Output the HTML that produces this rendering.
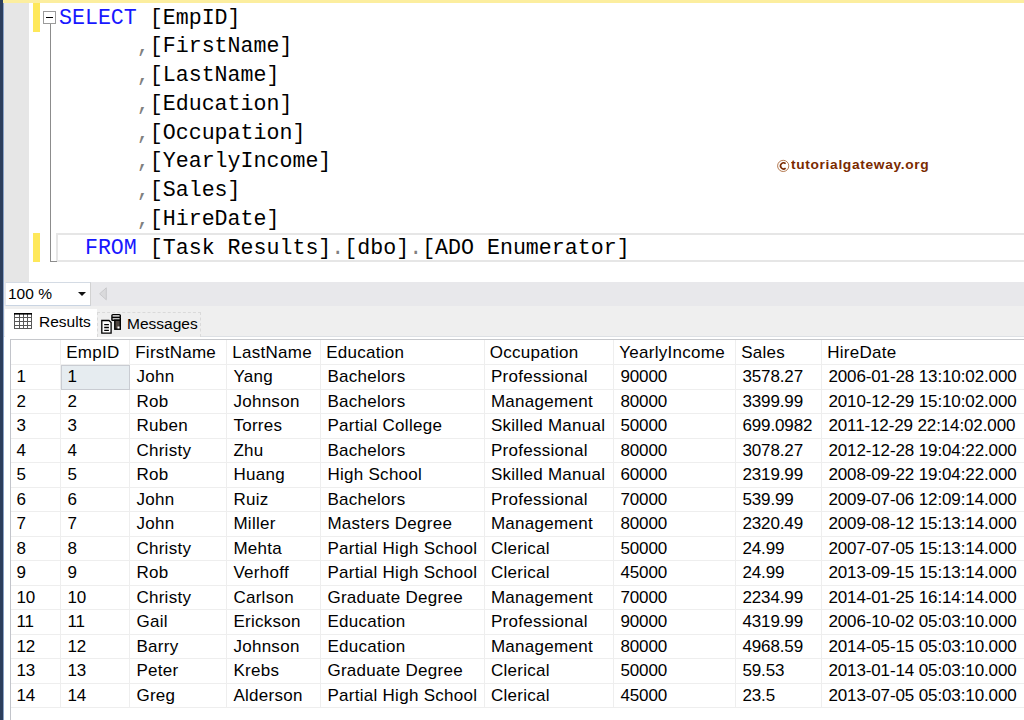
<!DOCTYPE html>
<html><head><meta charset="utf-8">
<style>
*{margin:0;padding:0;box-sizing:border-box}
html,body{width:1024px;height:720px;overflow:hidden;background:#fff}
body{position:relative;font-family:"Liberation Sans",sans-serif}
.abs{position:absolute}
#navy{left:0;top:0;width:2.5px;height:720px;background:#2c3e5c}
#navy2{left:2.5px;top:0;width:1.5px;height:720px;background:#8aa2c6}
#topband{left:3px;top:0;width:1021px;height:3px;background:#fcee9f}
#gutter{left:4px;top:3px;width:25px;height:279px;background:#e6e6e6}
.mark{left:32.5px;width:7.2px;background:#fee85a}
#box{left:43px;top:11px;width:13px;height:13px;border:1.5px solid #9b9b9b;background:#fff}
#minus{left:46px;top:16.5px;width:7px;height:1.5px;background:#000}
#vline{left:50px;top:24px;width:1px;height:237.5px;background:#8c8c8c}
#hline{left:50px;top:260.5px;width:7px;height:1px;background:#8c8c8c}
#curline{left:56px;top:233px;width:970px;height:29px;border:2px solid #e6e6e6;border-right:none}
.code{position:absolute;left:59px;font-family:"Liberation Mono",monospace;font-size:21.6px;letter-spacing:0.01px;line-height:28.75px;white-space:pre;color:#000}
.k{color:#1818ff}
.g{color:#808080}
#wm{left:790.5px;top:157.5px;font-family:"Liberation Sans",sans-serif;font-weight:bold;font-size:12.5px;color:#7a2a00;letter-spacing:0.6px;white-space:pre;transform:scaleX(1.1);transform-origin:0 0}
#zoombar{left:4px;top:281.5px;width:1020px;height:24.5px;background:#e8e8eb}
#tabbar{left:4px;top:306px;width:1020px;height:31px;background:#efefef}
#tabline{left:4px;top:336px;width:1020px;height:1px;background:#dde0e4}
#tabwhite{left:4px;top:337px;width:1020px;height:383px;background:#fff}
#combo{left:5px;top:282px;width:85.5px;height:23.5px;background:#fff;border:1px solid #e4e8ee;border-right-color:#d2d2d2;border-bottom-color:#c9d4e2;border-top-color:#d4dbe4}
#combotxt{left:8px;top:285px;font-size:15.5px;color:#000;white-space:pre}
#tri{left:78px;top:292px;width:0;height:0;border-left:4px solid transparent;border-right:4px solid transparent;border-top:4.2px solid #111}
#sarrow{display:none}
#tabres{left:5px;top:309px;width:92px;height:31px;background:#fff}
#tabmsg{left:97px;top:311.5px;width:104px;height:25px;background:#efefef;border:1px dashed #dadada;border-bottom:none}
.tabtxt{position:absolute;font-size:15.5px;color:#000;white-space:pre}
#grid{left:10px;top:339px;width:1014px;height:381px;background:#fff;border-left:1px solid #c2c4ca;border-top:1px solid #c6c8cc}
.cell{position:absolute;font-size:17px;color:#000;white-space:pre}
.vl{position:absolute;width:1px;background:#eeeeee}
.hl{position:absolute;height:1px;background:#eeeeee}
#sel{left:61px;top:364.5px;width:69px;height:25px;background:#e6ecf0;border:1px solid #c9ccd2}
</style></head><body>
<div id="navy" class="abs"></div>
<div id="navy2" class="abs"></div>
<div id="topband" class="abs"></div>
<div id="gutter" class="abs"></div>
<div class="abs mark" style="top:3px;height:28.5px"></div>
<div class="abs mark" style="top:233px;height:29px"></div>
<div id="curline" class="abs"></div>
<div id="box" class="abs"></div>
<div id="minus" class="abs"></div>
<div id="vline" class="abs"></div>
<div id="hline" class="abs"></div>
<div class="code" style="top:3.6px"><span class="k">SELECT</span> [EmpID]
      <span class="g">,</span>[FirstName]
      <span class="g">,</span>[LastName]
      <span class="g">,</span>[Education]
      <span class="g">,</span>[Occupation]
      <span class="g">,</span>[YearlyIncome]
      <span class="g">,</span>[Sales]
      <span class="g">,</span>[HireDate]
  <span class="k">FROM</span> [Task Results]<span class="g">.</span>[dbo]<span class="g">.</span>[ADO Enumerator]</div>
<div id="wm" class="abs">tutorialgateway.org</div>
<svg class="abs" style="left:770px;top:150px" width="30" height="30"><circle cx="13.2" cy="15.9" r="5.6" fill="none" stroke="#b57a50" stroke-width="1"/><path d="M15.6 13.7A3 3 0 1 0 15.6 18.1" fill="none" stroke="#7a2a00" stroke-width="1.6"/></svg>
<div id="zoombar" class="abs"></div>
<div id="tabbar" class="abs"></div>
<div id="tabline" class="abs"></div>
<div id="tabwhite" class="abs"></div>
<div id="combo" class="abs"></div>
<div id="combotxt" class="abs">100 %</div>
<div id="tri" class="abs"></div>
<svg class="abs" style="left:96px;top:285px" width="14" height="18"><path d="M10.3 2.8L3.6 8.8L10.3 14.8Z" fill="#dadadc" stroke="#c6c6c8" stroke-width="0.9"/></svg>
<div id="tabres" class="abs"></div>
<div id="tabmsg" class="abs"></div>
<div class="tabtxt" style="left:39px;top:313px">Results</div>
<div class="tabtxt" style="left:127px;top:315px">Messages</div>
<div id="grid" class="abs"></div>
<svg class="abs" style="left:0;top:0" width="1024" height="720" viewBox="0 0 1024 720">
<g fill="none" stroke="#585858" stroke-width="1">
<rect x="14.5" y="313.5" width="17" height="15" fill="#fff"/>
<path d="M19.5 314V329M23.5 314V329M27.5 314V329M14.5 317.5H31.5M14.5 321.5H31.5M14.5 325.5H31.5"/>
</g>
<rect x="14" y="313" width="18" height="1.6" fill="#000"/>
<g stroke="#000" stroke-width="1.3" fill="#fff">
<path d="M101.8 320.5H109L111.1 322.6V333.1H101.8Z"/>
<path d="M104.2 324.6H108.9M104.2 327.5H108.9M104.2 330.4H108.9" fill="none"/>
</g>
<g stroke="#000" stroke-width="1.4">
<rect x="111.9" y="314.6" width="8.4" height="2.9" rx="1" fill="#fff"/>
<rect x="111.9" y="317.5" width="8.4" height="2.7" rx="0.5" fill="#fff"/>
<rect x="114.8" y="320.2" width="5.5" height="9" fill="#4e4540"/>
</g>
<rect x="117.5" y="326.5" width="2" height="2" fill="#fff"/>
</svg>
<!--ROWS-->
<div class="vl" style="left:60.0px;top:340px;height:367.5px"></div>
<div class="vl" style="left:129.1px;top:340px;height:367.5px"></div>
<div class="vl" style="left:226.3px;top:340px;height:367.5px"></div>
<div class="vl" style="left:320.0px;top:340px;height:367.5px"></div>
<div class="vl" style="left:483.9px;top:340px;height:367.5px"></div>
<div class="vl" style="left:612.8px;top:340px;height:367.5px"></div>
<div class="vl" style="left:735.2px;top:340px;height:367.5px"></div>
<div class="vl" style="left:821.0px;top:340px;height:367.5px"></div>
<div class="hl" style="left:11px;top:364.2px;width:1013px"></div>
<div class="hl" style="left:11px;top:388.7px;width:1013px"></div>
<div class="hl" style="left:11px;top:413.2px;width:1013px"></div>
<div class="hl" style="left:11px;top:437.7px;width:1013px"></div>
<div class="hl" style="left:11px;top:462.2px;width:1013px"></div>
<div class="hl" style="left:11px;top:486.7px;width:1013px"></div>
<div class="hl" style="left:11px;top:511.2px;width:1013px"></div>
<div class="hl" style="left:11px;top:535.7px;width:1013px"></div>
<div class="hl" style="left:11px;top:560.2px;width:1013px"></div>
<div class="hl" style="left:11px;top:584.7px;width:1013px"></div>
<div class="hl" style="left:11px;top:609.2px;width:1013px"></div>
<div class="hl" style="left:11px;top:633.7px;width:1013px"></div>
<div class="hl" style="left:11px;top:658.2px;width:1013px"></div>
<div class="hl" style="left:11px;top:682.7px;width:1013px"></div>
<div class="hl" style="left:11px;top:707.2px;width:1013px"></div>
<div id="sel" class="abs"></div>
<div class="cell" style="left:66.2px;top:343.3px;letter-spacing:0.28px">EmpID</div>
<div class="cell" style="left:135.2px;top:343.3px;letter-spacing:0.28px">FirstName</div>
<div class="cell" style="left:232.2px;top:343.3px;letter-spacing:0.28px">LastName</div>
<div class="cell" style="left:326.2px;top:343.3px;letter-spacing:0.28px">Education</div>
<div class="cell" style="left:489.7px;top:343.3px;letter-spacing:0.28px">Occupation</div>
<div class="cell" style="left:619.2px;top:343.3px;letter-spacing:0.28px">YearlyIncome</div>
<div class="cell" style="left:741.2px;top:343.3px;letter-spacing:0.28px">Sales</div>
<div class="cell" style="left:827.2px;top:343.3px;letter-spacing:0.28px">HireDate</div>
<div class="cell" style="left:16.4px;top:367.3px;letter-spacing:-0.12px">1</div>
<div class="cell" style="left:67.4px;top:367.3px;letter-spacing:-0.12px">1</div>
<div class="cell" style="left:136.4px;top:367.3px;letter-spacing:0.28px">John</div>
<div class="cell" style="left:233.4px;top:367.3px;letter-spacing:0.28px">Yang</div>
<div class="cell" style="left:327.4px;top:367.3px;letter-spacing:0.28px">Bachelors</div>
<div class="cell" style="left:490.9px;top:367.3px;letter-spacing:0.28px">Professional</div>
<div class="cell" style="left:620.4px;top:367.3px;letter-spacing:-0.12px">90000</div>
<div class="cell" style="left:742.4px;top:367.3px;letter-spacing:-0.12px">3578.27</div>
<div class="cell" style="left:828.4px;top:367.3px;letter-spacing:-0.12px">2006-01-28 13:10:02.000</div>
<div class="cell" style="left:16.4px;top:391.8px;letter-spacing:-0.12px">2</div>
<div class="cell" style="left:67.4px;top:391.8px;letter-spacing:-0.12px">2</div>
<div class="cell" style="left:136.4px;top:391.8px;letter-spacing:0.28px">Rob</div>
<div class="cell" style="left:233.4px;top:391.8px;letter-spacing:0.28px">Johnson</div>
<div class="cell" style="left:327.4px;top:391.8px;letter-spacing:0.28px">Bachelors</div>
<div class="cell" style="left:490.9px;top:391.8px;letter-spacing:0.28px">Management</div>
<div class="cell" style="left:620.4px;top:391.8px;letter-spacing:-0.12px">80000</div>
<div class="cell" style="left:742.4px;top:391.8px;letter-spacing:-0.12px">3399.99</div>
<div class="cell" style="left:828.4px;top:391.8px;letter-spacing:-0.12px">2010-12-29 15:10:02.000</div>
<div class="cell" style="left:16.4px;top:416.3px;letter-spacing:-0.12px">3</div>
<div class="cell" style="left:67.4px;top:416.3px;letter-spacing:-0.12px">3</div>
<div class="cell" style="left:136.4px;top:416.3px;letter-spacing:0.28px">Ruben</div>
<div class="cell" style="left:233.4px;top:416.3px;letter-spacing:0.28px">Torres</div>
<div class="cell" style="left:327.4px;top:416.3px;letter-spacing:0.28px">Partial College</div>
<div class="cell" style="left:490.9px;top:416.3px;letter-spacing:0.28px">Skilled Manual</div>
<div class="cell" style="left:620.4px;top:416.3px;letter-spacing:-0.12px">50000</div>
<div class="cell" style="left:742.4px;top:416.3px;letter-spacing:-0.12px">699.0982</div>
<div class="cell" style="left:828.4px;top:416.3px;letter-spacing:-0.12px">2011-12-29 22:14:02.000</div>
<div class="cell" style="left:16.4px;top:440.8px;letter-spacing:-0.12px">4</div>
<div class="cell" style="left:67.4px;top:440.8px;letter-spacing:-0.12px">4</div>
<div class="cell" style="left:136.4px;top:440.8px;letter-spacing:0.28px">Christy</div>
<div class="cell" style="left:233.4px;top:440.8px;letter-spacing:0.28px">Zhu</div>
<div class="cell" style="left:327.4px;top:440.8px;letter-spacing:0.28px">Bachelors</div>
<div class="cell" style="left:490.9px;top:440.8px;letter-spacing:0.28px">Professional</div>
<div class="cell" style="left:620.4px;top:440.8px;letter-spacing:-0.12px">80000</div>
<div class="cell" style="left:742.4px;top:440.8px;letter-spacing:-0.12px">3078.27</div>
<div class="cell" style="left:828.4px;top:440.8px;letter-spacing:-0.12px">2012-12-28 19:04:22.000</div>
<div class="cell" style="left:16.4px;top:465.3px;letter-spacing:-0.12px">5</div>
<div class="cell" style="left:67.4px;top:465.3px;letter-spacing:-0.12px">5</div>
<div class="cell" style="left:136.4px;top:465.3px;letter-spacing:0.28px">Rob</div>
<div class="cell" style="left:233.4px;top:465.3px;letter-spacing:0.28px">Huang</div>
<div class="cell" style="left:327.4px;top:465.3px;letter-spacing:0.28px">High School</div>
<div class="cell" style="left:490.9px;top:465.3px;letter-spacing:0.28px">Skilled Manual</div>
<div class="cell" style="left:620.4px;top:465.3px;letter-spacing:-0.12px">60000</div>
<div class="cell" style="left:742.4px;top:465.3px;letter-spacing:-0.12px">2319.99</div>
<div class="cell" style="left:828.4px;top:465.3px;letter-spacing:-0.12px">2008-09-22 19:04:22.000</div>
<div class="cell" style="left:16.4px;top:489.8px;letter-spacing:-0.12px">6</div>
<div class="cell" style="left:67.4px;top:489.8px;letter-spacing:-0.12px">6</div>
<div class="cell" style="left:136.4px;top:489.8px;letter-spacing:0.28px">John</div>
<div class="cell" style="left:233.4px;top:489.8px;letter-spacing:0.28px">Ruiz</div>
<div class="cell" style="left:327.4px;top:489.8px;letter-spacing:0.28px">Bachelors</div>
<div class="cell" style="left:490.9px;top:489.8px;letter-spacing:0.28px">Professional</div>
<div class="cell" style="left:620.4px;top:489.8px;letter-spacing:-0.12px">70000</div>
<div class="cell" style="left:742.4px;top:489.8px;letter-spacing:-0.12px">539.99</div>
<div class="cell" style="left:828.4px;top:489.8px;letter-spacing:-0.12px">2009-07-06 12:09:14.000</div>
<div class="cell" style="left:16.4px;top:514.3px;letter-spacing:-0.12px">7</div>
<div class="cell" style="left:67.4px;top:514.3px;letter-spacing:-0.12px">7</div>
<div class="cell" style="left:136.4px;top:514.3px;letter-spacing:0.28px">John</div>
<div class="cell" style="left:233.4px;top:514.3px;letter-spacing:0.28px">Miller</div>
<div class="cell" style="left:327.4px;top:514.3px;letter-spacing:0.28px">Masters Degree</div>
<div class="cell" style="left:490.9px;top:514.3px;letter-spacing:0.28px">Management</div>
<div class="cell" style="left:620.4px;top:514.3px;letter-spacing:-0.12px">80000</div>
<div class="cell" style="left:742.4px;top:514.3px;letter-spacing:-0.12px">2320.49</div>
<div class="cell" style="left:828.4px;top:514.3px;letter-spacing:-0.12px">2009-08-12 15:13:14.000</div>
<div class="cell" style="left:16.4px;top:538.8px;letter-spacing:-0.12px">8</div>
<div class="cell" style="left:67.4px;top:538.8px;letter-spacing:-0.12px">8</div>
<div class="cell" style="left:136.4px;top:538.8px;letter-spacing:0.28px">Christy</div>
<div class="cell" style="left:233.4px;top:538.8px;letter-spacing:0.28px">Mehta</div>
<div class="cell" style="left:327.4px;top:538.8px;letter-spacing:0.28px">Partial High School</div>
<div class="cell" style="left:490.9px;top:538.8px;letter-spacing:0.28px">Clerical</div>
<div class="cell" style="left:620.4px;top:538.8px;letter-spacing:-0.12px">50000</div>
<div class="cell" style="left:742.4px;top:538.8px;letter-spacing:-0.12px">24.99</div>
<div class="cell" style="left:828.4px;top:538.8px;letter-spacing:-0.12px">2007-07-05 15:13:14.000</div>
<div class="cell" style="left:16.4px;top:563.3px;letter-spacing:-0.12px">9</div>
<div class="cell" style="left:67.4px;top:563.3px;letter-spacing:-0.12px">9</div>
<div class="cell" style="left:136.4px;top:563.3px;letter-spacing:0.28px">Rob</div>
<div class="cell" style="left:233.4px;top:563.3px;letter-spacing:0.28px">Verhoff</div>
<div class="cell" style="left:327.4px;top:563.3px;letter-spacing:0.28px">Partial High School</div>
<div class="cell" style="left:490.9px;top:563.3px;letter-spacing:0.28px">Clerical</div>
<div class="cell" style="left:620.4px;top:563.3px;letter-spacing:-0.12px">45000</div>
<div class="cell" style="left:742.4px;top:563.3px;letter-spacing:-0.12px">24.99</div>
<div class="cell" style="left:828.4px;top:563.3px;letter-spacing:-0.12px">2013-09-15 15:13:14.000</div>
<div class="cell" style="left:16.4px;top:587.8px;letter-spacing:-0.12px">10</div>
<div class="cell" style="left:67.4px;top:587.8px;letter-spacing:-0.12px">10</div>
<div class="cell" style="left:136.4px;top:587.8px;letter-spacing:0.28px">Christy</div>
<div class="cell" style="left:233.4px;top:587.8px;letter-spacing:0.28px">Carlson</div>
<div class="cell" style="left:327.4px;top:587.8px;letter-spacing:0.28px">Graduate Degree</div>
<div class="cell" style="left:490.9px;top:587.8px;letter-spacing:0.28px">Management</div>
<div class="cell" style="left:620.4px;top:587.8px;letter-spacing:-0.12px">70000</div>
<div class="cell" style="left:742.4px;top:587.8px;letter-spacing:-0.12px">2234.99</div>
<div class="cell" style="left:828.4px;top:587.8px;letter-spacing:-0.12px">2014-01-25 16:14:14.000</div>
<div class="cell" style="left:16.4px;top:612.3px;letter-spacing:-0.12px">11</div>
<div class="cell" style="left:67.4px;top:612.3px;letter-spacing:-0.12px">11</div>
<div class="cell" style="left:136.4px;top:612.3px;letter-spacing:0.28px">Gail</div>
<div class="cell" style="left:233.4px;top:612.3px;letter-spacing:0.28px">Erickson</div>
<div class="cell" style="left:327.4px;top:612.3px;letter-spacing:0.28px">Education</div>
<div class="cell" style="left:490.9px;top:612.3px;letter-spacing:0.28px">Professional</div>
<div class="cell" style="left:620.4px;top:612.3px;letter-spacing:-0.12px">90000</div>
<div class="cell" style="left:742.4px;top:612.3px;letter-spacing:-0.12px">4319.99</div>
<div class="cell" style="left:828.4px;top:612.3px;letter-spacing:-0.12px">2006-10-02 05:03:10.000</div>
<div class="cell" style="left:16.4px;top:636.8px;letter-spacing:-0.12px">12</div>
<div class="cell" style="left:67.4px;top:636.8px;letter-spacing:-0.12px">12</div>
<div class="cell" style="left:136.4px;top:636.8px;letter-spacing:0.28px">Barry</div>
<div class="cell" style="left:233.4px;top:636.8px;letter-spacing:0.28px">Johnson</div>
<div class="cell" style="left:327.4px;top:636.8px;letter-spacing:0.28px">Education</div>
<div class="cell" style="left:490.9px;top:636.8px;letter-spacing:0.28px">Management</div>
<div class="cell" style="left:620.4px;top:636.8px;letter-spacing:-0.12px">80000</div>
<div class="cell" style="left:742.4px;top:636.8px;letter-spacing:-0.12px">4968.59</div>
<div class="cell" style="left:828.4px;top:636.8px;letter-spacing:-0.12px">2014-05-15 05:03:10.000</div>
<div class="cell" style="left:16.4px;top:661.3px;letter-spacing:-0.12px">13</div>
<div class="cell" style="left:67.4px;top:661.3px;letter-spacing:-0.12px">13</div>
<div class="cell" style="left:136.4px;top:661.3px;letter-spacing:0.28px">Peter</div>
<div class="cell" style="left:233.4px;top:661.3px;letter-spacing:0.28px">Krebs</div>
<div class="cell" style="left:327.4px;top:661.3px;letter-spacing:0.28px">Graduate Degree</div>
<div class="cell" style="left:490.9px;top:661.3px;letter-spacing:0.28px">Clerical</div>
<div class="cell" style="left:620.4px;top:661.3px;letter-spacing:-0.12px">50000</div>
<div class="cell" style="left:742.4px;top:661.3px;letter-spacing:-0.12px">59.53</div>
<div class="cell" style="left:828.4px;top:661.3px;letter-spacing:-0.12px">2013-01-14 05:03:10.000</div>
<div class="cell" style="left:16.4px;top:685.8px;letter-spacing:-0.12px">14</div>
<div class="cell" style="left:67.4px;top:685.8px;letter-spacing:-0.12px">14</div>
<div class="cell" style="left:136.4px;top:685.8px;letter-spacing:0.28px">Greg</div>
<div class="cell" style="left:233.4px;top:685.8px;letter-spacing:0.28px">Alderson</div>
<div class="cell" style="left:327.4px;top:685.8px;letter-spacing:0.28px">Partial High School</div>
<div class="cell" style="left:490.9px;top:685.8px;letter-spacing:0.28px">Clerical</div>
<div class="cell" style="left:620.4px;top:685.8px;letter-spacing:-0.12px">45000</div>
<div class="cell" style="left:742.4px;top:685.8px;letter-spacing:-0.12px">23.5</div>
<div class="cell" style="left:828.4px;top:685.8px;letter-spacing:-0.12px">2013-07-05 05:03:10.000</div>
<!--/ROWS-->
</body></html>
